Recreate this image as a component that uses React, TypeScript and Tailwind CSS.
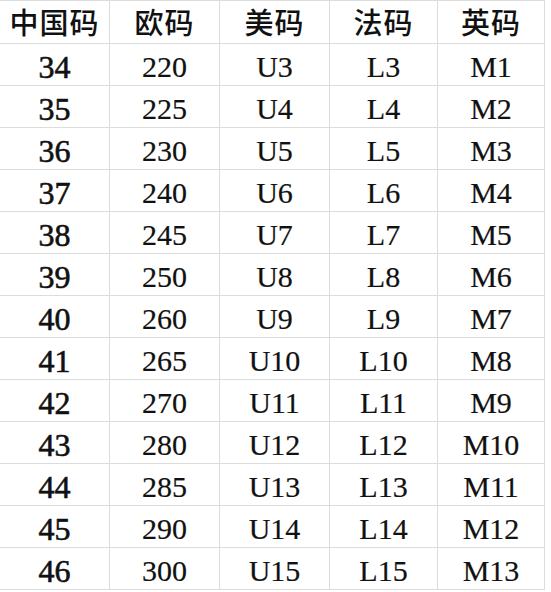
const header = ["中国码", "欧码", "美码", "法码", "英码"];

const rows: string[][] = [
  ["34", "220", "U3", "L3", "M1"],
  ["35", "225", "U4", "L4", "M2"],
  ["36", "230", "U5", "L5", "M3"],
  ["37", "240", "U6", "L6", "M4"],
  ["38", "245", "U7", "L7", "M5"],
  ["39", "250", "U8", "L8", "M6"],
  ["40", "260", "U9", "L9", "M7"],
  ["41", "265", "U10", "L10", "M8"],
  ["42", "270", "U11", "L11", "M9"],
  ["43", "280", "U12", "L12", "M10"],
  ["44", "285", "U13", "L13", "M11"],
  ["45", "290", "U14", "L14", "M12"],
  ["46", "300", "U15", "L15", "M13"],
];

const cols = "grid grid-cols-[110px_110px_110px_108px_107px]";

export default function App() {
  return (
    <div className="h-[592px] w-[551px] overflow-hidden bg-white text-[#111]">
      <div className="w-[545px] border-t border-[#dcdcdc]">
        <div className={`${cols} h-[43px] border-b border-[#dcdcdc]`}>
          {header.map((h, i) => (
            <div
              key={i}
              className="flex items-center justify-center border-r border-[#dcdcdc] pb-[2px] text-[29px] font-medium leading-none tracking-[1px] font-['Noto_Sans_CJK_SC',serif]"
            >
              {h}
            </div>
          ))}
        </div>
        {rows.map((r, ri) => (
          <div key={ri} className={`${cols} h-[42px] border-b border-[#dcdcdc]`}>
            {r.map((c, ci) => (
              <div
                key={ci}
                className={`flex items-center justify-center border-r border-[#dcdcdc] pt-[4px] leading-none font-['Liberation_Serif',serif] ${
                  ci === 0
                    ? "text-[32px] [-webkit-text-stroke:0.6px_#111]"
                    : "text-[30px] [-webkit-text-stroke:0.2px_#111]"
                }`}
              >
                {c}
              </div>
            ))}
          </div>
        ))}
      </div>
    </div>
  );
}
